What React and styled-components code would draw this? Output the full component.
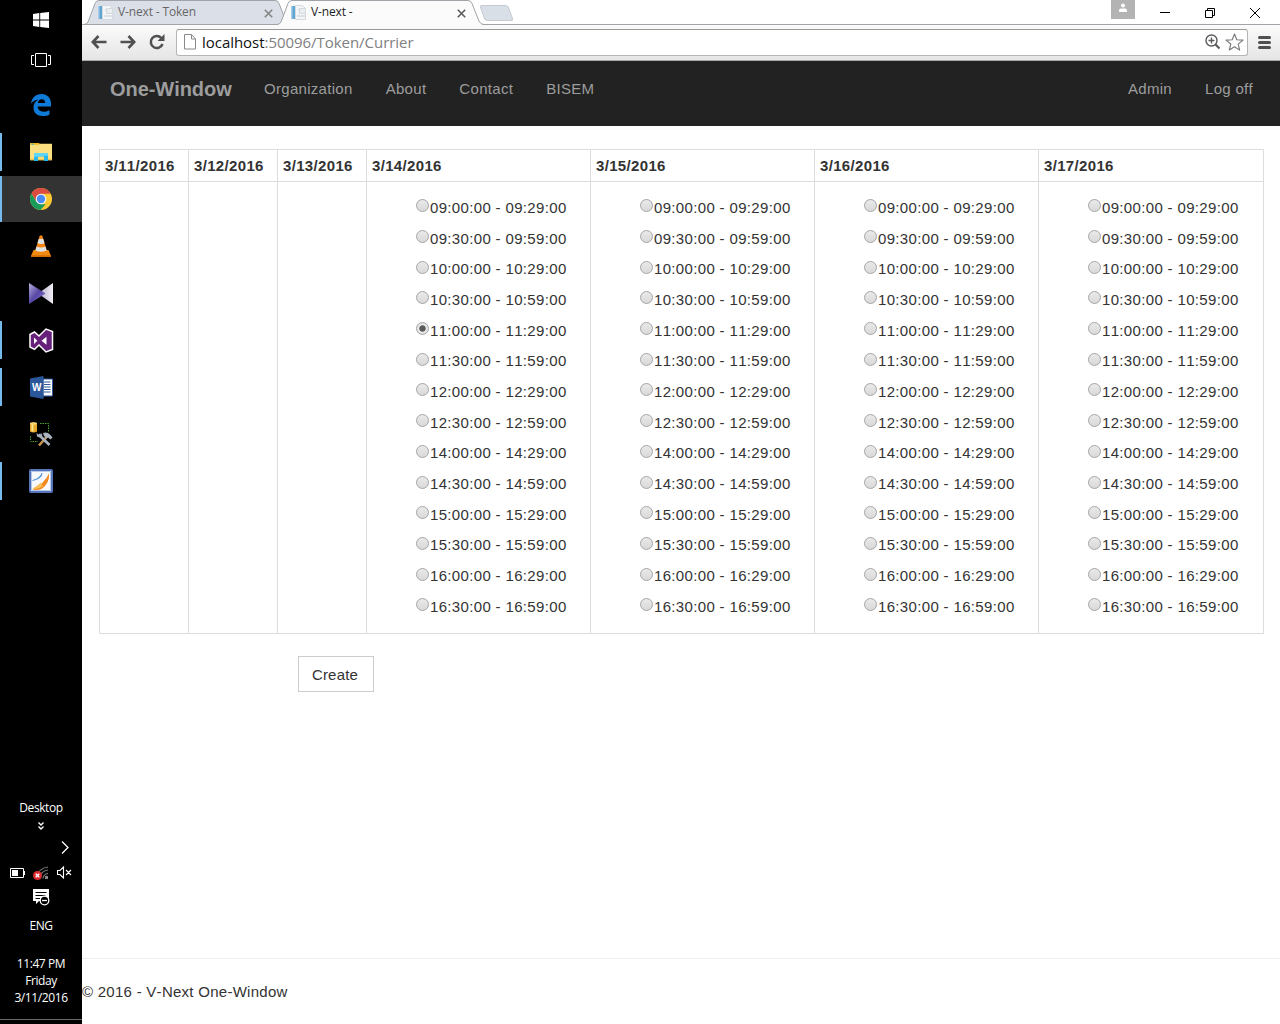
import React from 'react';
import styled, { createGlobalStyle } from 'styled-components';

const SLOTS = [
  '09:00:00 - 09:29:00', '09:30:00 - 09:59:00', '10:00:00 - 10:29:00', '10:30:00 - 10:59:00',
  '11:00:00 - 11:29:00', '11:30:00 - 11:59:00', '12:00:00 - 12:29:00', '12:30:00 - 12:59:00',
  '14:00:00 - 14:29:00', '14:30:00 - 14:59:00', '15:00:00 - 15:29:00', '15:30:00 - 15:59:00',
  '16:00:00 - 16:29:00', '16:30:00 - 16:59:00',
];

const DAYS = [
  { date: '3/11/2016', open: false },
  { date: '3/12/2016', open: false },
  { date: '3/13/2016', open: false },
  { date: '3/14/2016', open: true },
  { date: '3/15/2016', open: true },
  { date: '3/16/2016', open: true },
  { date: '3/17/2016', open: true },
];

/* taskbar icons */

const WindowsIcon = () => (
  <svg width="16" height="16" viewBox="0 0 16 16" fill="#fff">
    <path d="M0 2 6.3 1.1V7.5H0zM7.2 1 16 0V7.5H7.2zM0 8.5H6.3V14.9L0 14zM7.2 8.5H16V16L7.2 15z" />
  </svg>
);

const TaskViewIcon = () => (
  <svg width="20" height="14" viewBox="0 0 20 14" fill="none" stroke="#fff">
    <path d="M4.5.5h11v13h-11zM3 2.5H.5v9H3M17 2.5h2.500v9H17" />
  </svg>
);

const EdgeIcon = () => (
  <svg width="20" height="22" viewBox="0 0 20 22">
    <path
      d="M0 9.600C.7 4 4.500 0 10.500 0 16.500 0 20 4.300 20 9.500V12.500H6.700C6.900 16 9.500 17.700 13 17.700c2.200 0 4-.6 5.500-1.500v4.300c-1.800 1-4 1.500-6.500 1.500C6 22 2.500 18.500 2.500 13.500c0-3.500 1.800-6.300 4.800-7.900C4.500 5.900 1.700 7.300 0 9.600zM6.900 9h7.300C14.200 6.600 13 5.200 10.800 5.200 8.500 5.200 7.200 6.800 6.900 9z"
      fill="#0f7bd8"
    />
  </svg>
);

const ExplorerIcon = () => (
  <svg width="22" height="18" viewBox="0 0 22 18">
    <path d="M0 0h9.500v2H0z" fill="#efb71e" />
    <path d="M0 1.700h8.500l1.500-.9h12V17.200H0z" fill="#fbdf80" />
    <path d="M1.500.7h2.500v1H1.500z" fill="#43b7c8" />
    <path d="M0 15.800h22v1.400H0z" fill="#edc351" />
    <path d="M4 10h14v8h-4v-4.500H8V18H4z" fill="#26b8e8" />
    <path d="M4 10h14v2.500L4 14z" fill="#5fd6f5" />
  </svg>
);

const ChromeIcon = () => (
  <svg width="24" height="24" viewBox="0 0 24 24">
    <circle cx="12" cy="12" r="11" fill="#fcc934" />
    <path d="M2.400 6.500A11 11 0 0 1 21.600 6.700H12L7.300 14.700z" fill="#db4b3f" />
    <path d="M2.400 6.500 7.300 14.700 12 17.300h4.600L11.500 23A11 11 0 0 1 2.400 6.500z" fill="#199b5a" />
    <circle cx="12" cy="12" r="5.300" fill="#f4f4f4" />
    <circle cx="12" cy="12" r="4.200" fill="#4a8af4" />
  </svg>
);

const ConeIcon = () => (
  <svg width="20" height="22" viewBox="0 0 20 22">
    <path d="M2.500 15h15L20 21q0 1-1 1H1q-1 0-1-1z" fill="#f28a12" />
    <path d="M.3 20.300h19.400V22H.3z" fill="#d46b05" />
    <path d="M8.700.8q1.300-1.200 2.600 0L16 16.500q-6 3.500-12 0z" fill="#f58410" />
    <path d="M7.700 4h4.600l1.300 4.200q-3.600 1.500-7.200 0zM5.500 11.500q4.500 1.800 9 0l1.200 4q-5.700 2.600-11.400 0z" fill="#dfe2e3" />
  </svg>
);

const PlayerIcon = () => (
  <svg width="24" height="21" viewBox="0 0 24 21">
    <defs>
      <linearGradient id="bowLeft" x1="0" x2="1" y1="0" y2="1">
        <stop offset="0" stopColor="#b9b2dc" />
        <stop offset=".5" stopColor="#5846a5" />
        <stop offset="1" stopColor="#8c7ed1" />
      </linearGradient>
      <linearGradient id="bowRight" x1="0" x2="1">
        <stop offset="0" stopColor="#b1a5c8" />
        <stop offset="1" stopColor="#f2eff5" />
      </linearGradient>
    </defs>
    <path d="M24 0V21L9 10.500z" fill="url(#bowRight)" />
    <path d="M0 0 16.500 10.500 0 21z" fill="url(#bowLeft)" />
  </svg>
);

const StudioIcon = () => (
  <svg width="25" height="25" viewBox="0 0 25 25">
    <path d="M1 6.500 5.500 4 10 8 17 1l6.500 2.500v18L17 24l-7-7-4.500 4.300L1 19z" fill="#68217a" stroke="#fff" strokeWidth="1.500" />
    <path d="M5 9.500v6.500l3.300-3.200zM12.500 12.700l5-4v8z" fill="#fff" />
  </svg>
);

const WordIcon = () => (
  <svg width="23" height="23" viewBox="0 0 23 23">
    <path d="M13 3h9.500v17H13z" fill="#fff" stroke="#2b579a" />
    <path d="M14 6h6.500M14 8.500h6.500M14 11h6.500M14 13.500h6.500M14 16h6.500" stroke="#2b579a" />
    <path d="M0 2.500 13.500 0v23L0 20.500z" fill="#2b579a" />
    <text x="6.800" y="15.300" fill="#fff" fontFamily="Liberation Sans, sans-serif" fontSize="10" fontWeight="700" textAnchor="middle">W</text>
  </svg>
);

const ToolsIcon = () => (
  <svg width="24" height="26" viewBox="0 0 24 26">
    <path d="M1 2.500q3.500-2 7 0v8q-3.500 2-7 0z" fill="#e5a82a" />
    <path d="M2.500 3h2v7.500h-2z" fill="#ffe28a" />
    <ellipse cx="4.500" cy="2.500" rx="3.500" ry="1.200" fill="#f8d574" />
    <path d="M11 2.500h8.500v9M1.500 15v5.500H9" fill="none" stroke="#4aa52f" strokeDasharray="1.500 1" />
    <path d="M10 24.500 18.500 15" stroke="#c9944c" strokeWidth="2.500" />
    <path d="M9.500 13.500 20.500 24" stroke="#a9b4bf" strokeWidth="2.600" />
    <path d="M7.500 11.500 8 15.500l3 1 2.500-2.500L12 12l-1 2-1.800-.2zM14 12q4-1.500 6.500 1l3 3.500-2 2-2.500-2-1.500 1-2.500-2.500z" fill="#a9b4bf" />
  </svg>
);

const SwooshIcon = () => (
  <svg width="24" height="24" viewBox="0 0 24 24">
    <rect x="1" y="1" width="22" height="22" rx="1" fill="#f7f9fc" stroke="#5674b9" strokeWidth="2" />
    <path d="M2.500 2.500h19v19h-19z" fill="none" stroke="#b7c9e8" />
    <path d="M3.500 11.500Q10.500 9.500 13 4q.5 5.500-9.500 7.500z" fill="#4c8ed3" stroke="#4c8ed3" strokeWidth=".6" />
    <path d="M3.500 20.500Q15.500 14.500 20 4.500 21 14 12.500 20 8 21.500 3.500 20.500z" fill="#f1891c" />
    <path d="M3.500 19.800Q8 17 11.500 14l2.500 3q-4.500 4-10.500 2.800z" fill="#fbbd56" />
    <path d="M13 20.500q5.500-3.500 7-9v9.500h-7.500z" fill="#f7f9fc" />
  </svg>
);

const APPS = [
  { name: 'edge', icon: <EdgeIcon /> },
  { name: 'explorer', icon: <ExplorerIcon />, running: true },
  { name: 'chrome', icon: <ChromeIcon />, running: true, active: true },
  { name: 'vlc', icon: <ConeIcon /> },
  { name: 'player', icon: <PlayerIcon /> },
  { name: 'studio', icon: <StudioIcon />, running: true },
  { name: 'word', icon: <WordIcon />, running: true },
  { name: 'tools', icon: <ToolsIcon /> },
  { name: 'reader', icon: <SwooshIcon />, running: true },
];

/* tray icons */

const ChevronsIcon = () => (
  <svg width="6" height="8" viewBox="0 0 6 8" fill="none" stroke="#fff" strokeWidth="1.300">
    <path d="M.5.5 3 3 5.500.5M.5 4.500 3 7l2.500-2.500" />
  </svg>
);

const ArrowIcon = () => (
  <svg width="8" height="13" viewBox="0 0 8 13" fill="none" stroke="#fff" strokeWidth="1.300">
    <path d="M1 .5 7 6.500l-6 6" />
  </svg>
);

const BatteryIcon = () => (
  <svg width="15" height="10" viewBox="0 0 15 10">
    <path d="M.5.5h13v9H.5z" fill="none" stroke="#fff" />
    <path d="M2 2h6v6H2zM14 3h1v4h-1z" fill="#fff" />
  </svg>
);

const WifiIcon = () => (
  <svg width="16" height="14" viewBox="0 0 16 14">
    <g fill="none" stroke="#777" strokeWidth="1.200">
      <path d="M4 12.500Q5 2 15 1M7 12.500Q7.500 5 15 4M10 12.500Q10.500 8 15 7.500" />
    </g>
    <path d="M12 10h3v3h-3z" fill="#888" />
    <circle cx="4.500" cy="9.500" r="4.500" fill="#d92c31" />
    <path d="m2.700 7.700 3.600 3.600m0-3.600-3.600 3.600" stroke="#fff" strokeWidth="1.300" />
  </svg>
);

const MuteIcon = () => (
  <svg width="15" height="13" viewBox="0 0 15 13" fill="none" stroke="#fff">
    <path d="M.5 4.500H3L6.500 1v11L3 8.500H.5zM9 4l5 5m0-5-5 5" strokeWidth="1.100" />
  </svg>
);

const NoticeIcon = () => (
  <svg width="17" height="17" viewBox="0 0 17 17">
    <path d="M0 0h16v12H6l-3 3v-3H0z" fill="#fff" />
    <path d="M2.500 3.500h11M2.500 6.500h10M2.500 9.500h5" stroke="#000" />
    <circle cx="11.500" cy="11.500" r="4.300" fill="#000" stroke="#fff" strokeWidth="1.300" />
    <path d="M9 11.500h5" stroke="#fff" strokeWidth="1.300" />
  </svg>
);

/* browser icons */

const PageIcon = () => (
  <svg width="16" height="16" viewBox="0 0 16 16">
    <path d="M0 1h4v13H0z" fill="#5fa5d4" />
    <path d="M0 1h1.500v13H0z" fill="#a8cde7" />
    <path d="M4.500.5h7l3 3v11h-10z" fill="#f3f5f7" stroke="#d5dade" />
    <path d="M7 5h3M9 8.500h5M6 11h8" stroke="#c4ccd3" />
    <path d="M8.500 3.500h6v5h-6z" fill="#e9edf0" stroke="#d3d9de" />
  </svg>
);

const CloseIcon = () => (
  <svg width="9" height="9" viewBox="0 0 9 9" strokeWidth="1.600">
    <path d="m.8.8 7.400 7.400m0-7.400L.8 8.200" />
  </svg>
);

const BackIcon = () => (
  <svg width="16" height="14" viewBox="0 0 16 14" fill="none" stroke="#505050" strokeWidth="2.600">
    <path d="M7.500 1 1.800 7l5.700 6M2 7h13.500" />
  </svg>
);

const ForwardIcon = () => (
  <svg width="16" height="14" viewBox="0 0 16 14" fill="none" stroke="#505050" strokeWidth="2.600">
    <path d="m8.500 1 5.700 6-5.700 6M14 7H.5" />
  </svg>
);

const ReloadIcon = () => (
  <svg width="16" height="16" viewBox="0 0 16 16">
    <path d="M12.300 4A6 6 0 1 0 13.500 10" fill="none" stroke="#505050" strokeWidth="2.500" />
    <path d="M15.500 0v7H8.500z" fill="#505050" />
  </svg>
);

const DocIcon = () => (
  <svg width="12" height="16" viewBox="0 0 12 16" fill="#fff" stroke="#8a8a8a">
    <path d="M.5.5h7l4 4.500v10H.5zM7.500.5V5h4" />
  </svg>
);

const ZoomIcon = () => (
  <svg width="15" height="16" viewBox="0 0 15 16" fill="none" stroke="#5a5a5a">
    <circle cx="6.500" cy="6.500" r="5.500" strokeWidth="1.400" />
    <path d="M3.500 6.500h6M6.500 3.500v6" strokeWidth="1.400" />
    <path d="m10.500 10.500 4 4" strokeWidth="2.200" />
  </svg>
);

const StarIcon = () => (
  <svg width="19" height="18" viewBox="0 0 19 18" fill="#fff" stroke="#777" strokeWidth="1.100">
    <path strokeLinejoin="round" d="m9.500 1 2.300 5.700 6.200.4-4.800 4 1.500 6-5.200-3.300L4.300 17l1.500-6L1 7.100l6.200-.4z" />
  </svg>
);

const MenuIcon = () => (
  <svg width="13" height="13" viewBox="0 0 13 13" stroke="#505050" strokeWidth="3" strokeLinecap="round">
    <path d="M1.500 1.500h10M1.500 6.500h10M1.500 11.500h10" />
  </svg>
);

const PersonIcon = () => (
  <svg width="10" height="10" viewBox="0 0 10 10" fill="#fff">
    <circle cx="5" cy="2.500" r="2" />
    <path d="M1 9V7.500Q1 5.500 3 5.500h4q2 0 2 2V9z" />
  </svg>
);

const TabShape = ({ active }) => (
  <svg width="208" height="25" viewBox="0 0 208 25">
    <path
      d="M0 25Q3 24.500 4 22L11 3.500Q12 .5 15 .5H191Q194 .5 195 3.500L202 21Q203.500 24.500 207 25z"
      fill={active ? '#fbfbfb' : '#dbe0e8'}
    />
    <path
      d="M0 24.500Q3 24 4 22L11 3.500Q12 .5 15 .5H191Q194 .5 195 3.500L202 21Q203.500 24.500 207 24.500"
      fill="none"
      stroke="#a0a4a8"
    />
    {!active && <path d="M0 24.500h208" stroke="#a0a4a8" />}
  </svg>
);

const App = () => (
  <Screen>
    <GlobalStyle />
    <Taskbar>
      <SystemButton><WindowsIcon /></SystemButton>
      <SystemButton><TaskViewIcon /></SystemButton>
      <AppList>
        {APPS.map((app) => (
          <AppButton key={app.name} $running={app.running} $active={app.active}>{app.icon}</AppButton>
        ))}
      </AppList>
      <Tray>
        <TrayText>Desktop</TrayText>
        <TrayRow $height={20}><ChevronsIcon /></TrayRow>
        <TrayRow $height={22} $align="flex-end"><ArrowIcon /></TrayRow>
        <TrayRow $height={29} $align="space-between">
          <BatteryIcon />
          <WifiIcon />
          <MuteIcon />
        </TrayRow>
        <TrayRow $height={20}><NoticeIcon /></TrayRow>
        <Language>ENG</Language>
        <TrayText>11:47 PM</TrayText>
        <TrayText>Friday</TrayText>
        <TrayText>3/11/2016</TrayText>
      </Tray>
    </Taskbar>

    <Browser>
      <TabStrip>
        <Tab>
          <TabShape />
          <TabContent>
            <PageIcon />
            <TabTitle>V-next - Token</TabTitle>
            <CloseIcon />
          </TabContent>
        </Tab>
        <Tab $active>
          <TabShape active />
          <TabContent $active>
            <PageIcon />
            <TabTitle>V-next -</TabTitle>
            <CloseIcon />
          </TabContent>
        </Tab>
        <NewTab />
        <WindowControls>
          <Profile><PersonIcon /></Profile>
          <svg width="10" height="10" viewBox="0 0 10 10" stroke="#000"><path d="M0 4.500h10" /></svg>
          <svg width="10" height="10" viewBox="0 0 10 10" fill="none" stroke="#000"><path d="M.5 2.500h7v7h-7zM2.500 2.500v-2h7v7h-2" /></svg>
          <svg width="10" height="10" viewBox="0 0 10 10" stroke="#000"><path d="m0 0 10 10M10 0 0 10" /></svg>
        </WindowControls>
      </TabStrip>
      <Toolbar>
        <NavIcons>
          <BackIcon />
          <ForwardIcon />
          <ReloadIcon />
        </NavIcons>
        <AddressBar>
          <DocIcon />
          <Url>
            localhost
            <span>:50096/Token/Currier</span>
          </Url>
          <ZoomIcon />
          <StarIcon />
        </AddressBar>
        <MenuIcon />
      </Toolbar>

      <Navbar>
        <Brand>One-Window</Brand>
        <NavLink>Organization</NavLink>
        <NavLink>About</NavLink>
        <NavLink>Contact</NavLink>
        <NavLink>BISEM</NavLink>
        <NavRight>
          <NavLink>Admin</NavLink>
          <NavLink>Log off</NavLink>
        </NavRight>
      </Navbar>

      <Body>
        <Table>
          <colgroup>
            {DAYS.map((day, i) => (
              <Col key={day.date} $width={day.open ? (i === 6 ? 225 : 224) : 89} />
            ))}
          </colgroup>
          <thead>
            <tr>
              {DAYS.map((day) => <HeadCell key={day.date}>{day.date}</HeadCell>)}
            </tr>
          </thead>
          <tbody>
            <tr>
              {DAYS.map((day) => (
                <Cell key={day.date}>
                  {day.open && (
                    <SlotList>
                      {SLOTS.map((slot, i) => (
                        <Slot key={slot}>
                          <Radio type="radio" name="slot" defaultChecked={day.date === '3/14/2016' && i === 4} />
                          {slot}
                        </Slot>
                      ))}
                    </SlotList>
                  )}
                </Cell>
              ))}
            </tr>
          </tbody>
        </Table>
        <CreateButton type="button">Create</CreateButton>
      </Body>
      <Footer>© 2016 - V-Next One-Window</Footer>
    </Browser>
  </Screen>
);

const GlobalStyle = createGlobalStyle`
  * {
    box-sizing: border-box;
  }
  body {
    margin: 0;
    background: #fff;
    overflow: hidden;
  }
  svg {
    display: block;
    flex-shrink: 0;
  }
`;

const Screen = styled.div`
  display: flex;
  width: 1280px;
  height: 1024px;
  font-family: "Liberation Sans", Arial, sans-serif;
  font-kerning: none;
`;

const Taskbar = styled.div`
  display: flex;
  flex-direction: column;
  width: 82px;
  background: #000;
  color: #fff;
  font-family: "Open Sans", "Noto Sans", sans-serif;
  font-size: 12px;
`;

const SystemButton = styled.div`
  display: flex;
  align-items: center;
  justify-content: center;
  height: 40px;
`;

const AppList = styled.div`
  display: flex;
  flex-direction: column;
  gap: 1px;
  padding-top: 2px;
`;

const AppButton = styled.div`
  display: flex;
  align-items: center;
  justify-content: center;
  height: 46px;
  background-color: ${(props) => (props.$active ? '#333' : 'transparent')};
  background-image: ${(props) => (props.$running ? 'linear-gradient(#76b9ed, #76b9ed)' : 'none')};
  background-repeat: no-repeat;
  background-position: left center;
  background-size: 2px ${(props) => (props.$active ? '46px' : '38px')};
`;

const Tray = styled.div`
  display: flex;
  flex-direction: column;
  margin-top: auto;
  margin-bottom: 4px;
  padding-bottom: 13px;
  border-bottom: 1px solid #6b6b6b;
`;

const TrayText = styled.div`
  line-height: 17px;
  text-align: center;
  letter-spacing: -0.4px;
  white-space: nowrap;
`;

const Language = styled(TrayText)`
  margin: 10px 0 21px;
`;

const TrayRow = styled.div`
  display: flex;
  align-items: center;
  justify-content: ${(props) => props.$align || 'center'};
  height: ${(props) => props.$height}px;
  padding: 0 ${(props) => (props.$align === 'flex-end' ? 13 : 10)}px;
`;

const Browser = styled.div`
  display: flex;
  flex-direction: column;
  flex: 1;
  min-width: 0;
`;

const TabStrip = styled.div`
  display: flex;
  height: 25px;
  padding-left: 2px;
  box-shadow: inset 0 -1px #a0a4a8;
`;

const Tab = styled.div`
  position: relative;
  z-index: ${(props) => (props.$active ? 2 : 1)};
  width: 208px;
  height: 25px;
  margin-right: -15px;

  > svg {
    position: absolute;
    inset: 0;
  }
`;

const TabContent = styled.div`
  position: relative;
  display: flex;
  align-items: center;
  gap: 4px;
  height: 25px;
  padding: 1px 19px 0 14px;
  color: ${(props) => (props.$active ? '#222' : '#666')};

  svg:last-child {
    stroke: ${(props) => (props.$active ? '#5a5a5a' : '#858585')};
  }
`;

const TabTitle = styled.div`
  flex: 1;
  font-family: "Open Sans", "Noto Sans", sans-serif;
  font-size: 12px;
  letter-spacing: -0.15px;
  line-height: 22px;
  padding-bottom: 2px;
  white-space: nowrap;
`;

const NewTab = styled.div`
  width: 29px;
  height: 16px;
  margin: 5px 0 0 12px;
  background: #d9dfe7;
  border: 1px solid #c5cad0;
  border-radius: 3px;
  transform: skewX(20deg);
`;

const WindowControls = styled.div`
  display: flex;
  align-items: center;
  gap: 36px;
  margin-left: auto;
  padding-right: 20px;

  svg + svg {
    margin-left: -1px;
  }
`;

const Profile = styled.div`
  display: flex;
  justify-content: center;
  align-self: flex-start;
  width: 24px;
  height: 19px;
  margin-right: -11px;
  padding-top: 3px;
  background: #b3b3b3;
`;

const Toolbar = styled.div`
  display: flex;
  align-items: center;
  height: 36px;
  padding: 0 9px 1px;
  background: linear-gradient(#fbfbfb, #e5e5e5);
  border-bottom: 1px solid #aaa;
`;

const NavIcons = styled.div`
  display: flex;
  align-items: center;
  gap: 13px;
  width: 85px;
`;

const AddressBar = styled.div`
  display: flex;
  align-items: center;
  width: 1072px;
  height: 27px;
  margin-right: 10px;
  padding: 0 3px 0 7px;
  background: #fff;
  border: 1px solid #b5b5b5;
  border-top-color: #999;
  border-radius: 3px;

  svg:last-child {
    margin-left: 5px;
  }
`;

const Url = styled.div`
  flex: 1;
  margin-left: 6px;
  padding-bottom: 1px;
  color: #111;
  font-family: "Open Sans", "Noto Sans", sans-serif;
  font-size: 15px;
  letter-spacing: -0.04px;
  white-space: nowrap;

  span {
    color: #808080;
  }
`;

const Navbar = styled.div`
  display: flex;
  gap: 33px;
  height: 65px;
  padding: 0 27px 0 28px;
  background: #222;
  color: #9d9d9d;
  font-size: 15px;
  line-height: 56px;
`;

const Brand = styled.div`
  width: 121px;
  font-size: 20px;
  font-weight: 700;
  letter-spacing: -0.05px;
  white-space: nowrap;
`;

const NavLink = styled.div`
  letter-spacing: 0.3px;
  white-space: nowrap;
`;

const NavRight = styled.div`
  display: flex;
  gap: 33px;
  margin-left: auto;
`;

const Body = styled.div`
  flex: 1;
  padding: 23px 0 0 17px;
  color: #333;
  font-size: 15px;
`;

const Table = styled.table`
  width: 1165px;
  table-layout: fixed;
  border-collapse: collapse;
  letter-spacing: 0.34px;
`;

const Col = styled.col`
  width: ${(props) => props.$width}px;
`;

const HeadCell = styled.th`
  height: 32px;
  padding: 0 5px;
  border: 1px solid #ddd;
  text-align: left;
  line-height: 31px;
`;

const Cell = styled.td`
  height: 452px;
  padding: 0;
  border: 1px solid #ddd;
  vertical-align: top;
`;

const SlotList = styled.ul`
  margin: 0;
  padding: 10px 0 0 49px;
  list-style: none;
`;

const Slot = styled.li`
  display: flex;
  align-items: center;
  gap: 1px;
  height: 30.7px;
  white-space: nowrap;
`;

const Radio = styled.input`
  appearance: none;
  width: 13px;
  height: 13px;
  margin: 0 0 3px;
  border: 1px solid #a6a6a6;
  border-radius: 50%;
  background: linear-gradient(#e9e9e9, #d9d9d9);

  &:checked {
    background: radial-gradient(circle, #5a5a5a 0 2.800px, #e4e4e4 3.500px);
  }
`;

const CreateButton = styled.button`
  display: block;
  width: 76px;
  height: 36px;
  margin: 22px 0 0 199px;
  padding: 0 2px 0 0;
  border: 1px solid #ccc;
  background: #fff;
  color: #333;
  font: inherit;
  letter-spacing: 0.2px;
`;

const Footer = styled.div`
  height: 66px;
  border-top: 1px solid #eee;
  color: #333;
  font-size: 15px;
  line-height: 66px;
  letter-spacing: 0.27px;
`;

export default App;
